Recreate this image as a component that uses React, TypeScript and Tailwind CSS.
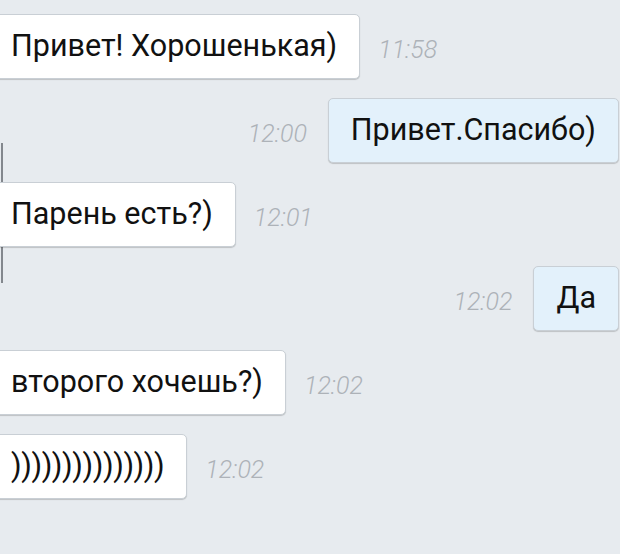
const messages = [
  { text: 'Привет! Хорошенькая)', time: '11:58', out: false },
  { text: 'Привет.Спасибо)', time: '12:00', out: true },
  { text: 'Парень есть?)', time: '12:01', out: false },
  { text: 'Да', time: '12:02', out: true },
  { text: 'второго хочешь?)', time: '12:02', out: false },
  { text: ')))))))))))))))', time: '12:02', out: false, tight: true },
];

const Bubble = ({ text, out, tight }: { text: string; out: boolean; tight?: boolean }) => (
  <div
    className={`h-[65px] flex items-center px-[22px] rounded-[5px] border border-[#c9cfd5] shadow-[0_1px_1px_rgba(0,0,0,0.18)] text-[30.5px] leading-none text-[#111] ${
      out ? 'bg-[#e3f1fb]' : 'bg-white'
    } ${tight ? 'tracking-[-0.4px]' : ''}`}
  >
    {text}
  </div>
);

const Time = ({ time }: { time: string }) => (
  <span className="mt-[6px] text-[25px] italic font-light text-[#adb2b8] leading-none">{time}</span>
);

export default function App() {
  return (
    <div
      className="relative w-[620px] h-[554px] overflow-hidden bg-[#e7ebef] pt-[14px]"
      style={{ fontFamily: 'Roboto, "Noto Sans", sans-serif' }}
    >
      {/* stray divider line on the left edge */}
      <div className="absolute left-[1px] top-[143px] w-[2px] h-[140px] bg-[#83878d]" />
      <div className="flex flex-col gap-[19px]">
        {messages.map((m, i) =>
          m.out ? (
            <div key={i} className="flex items-center justify-end gap-[21px] pr-[1px]">
              <Time time={m.time} />
              <Bubble text={m.text} out />
            </div>
          ) : (
            <div key={i} className="relative flex items-center gap-[18px] ml-[-12px]">
              <Bubble text={m.text} out={false} tight={m.tight} />
              <Time time={m.time} />
            </div>
          )
        )}
      </div>
    </div>
  );
}
